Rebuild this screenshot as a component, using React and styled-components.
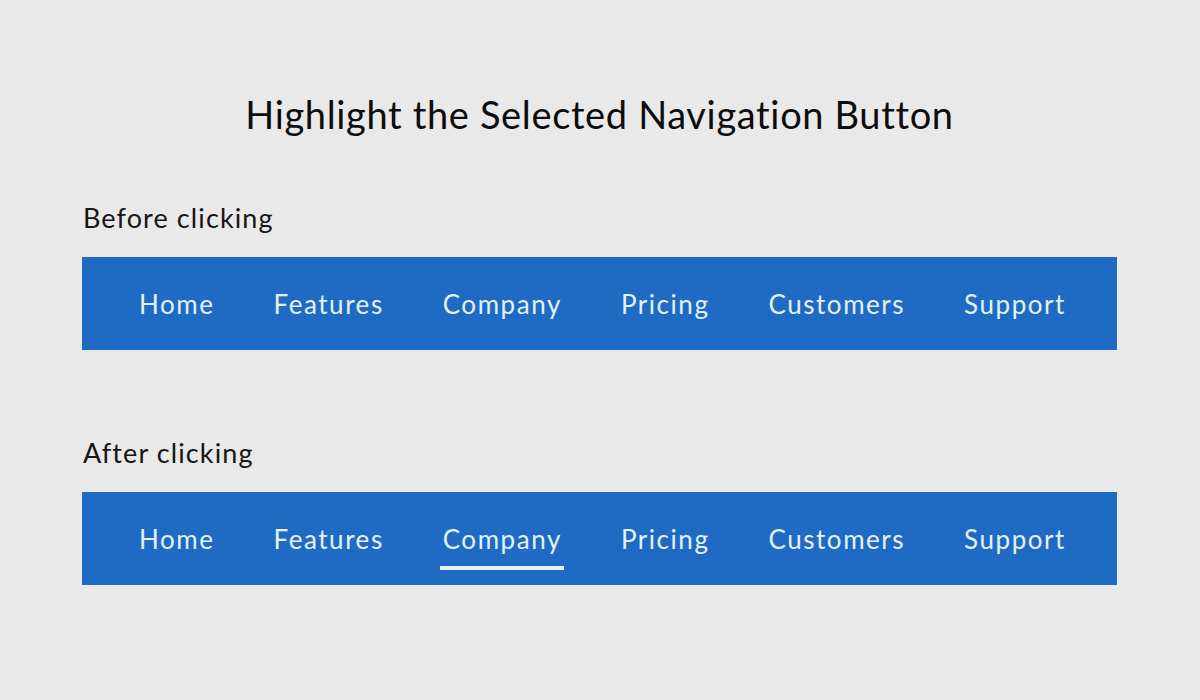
import React, { useState } from "react";
import styled, { createGlobalStyle } from "styled-components";

const Global = createGlobalStyle`
  html, body { margin: 0; padding: 0; background: #e9e9e9; }
  body { font-family: "Lato", "Noto Sans", sans-serif; color: #111; }
`;

const Page = styled.div`
  width: 1200px;
  height: 700px;
  box-sizing: border-box;
  padding: 90px 83px 0 82px;
  display: flex;
  flex-direction: column;
`;

const Title = styled.h1`
  margin: 0;
  text-align: center;
  font-size: 38px;
  font-weight: 400;
  line-height: 48px;
  letter-spacing: 0.65px;
  color: #0d0d0d;
`;

const Section = styled.section`
  display: flex;
  flex-direction: column;
  margin-top: ${(p) => p.$top}px;
`;

const Label = styled.div`
  font-size: 27px;
  line-height: 34px;
  letter-spacing: 1.1px;
  color: #161616;
  margin-left: 1px;
  margin-bottom: 22px;
`;

const Bar = styled.nav`
  height: 93px;
  background: #1f6bc4;
  display: flex;
  align-items: center;
  justify-content: center;
  gap: 59px;
  padding-left: 6px;
`;

const Item = styled.a`
  position: relative;
  font-size: 26px;
  line-height: 32px;
  color: #e3f1fb;
  text-decoration: none;
  cursor: pointer;
  letter-spacing: 1.55px;

  &::after {
    content: "";
    position: absolute;
    left: -3px;
    right: -2px;
    bottom: -15px;
    height: 4px;
    background: #eaf4fc;
    display: ${(p) => (p.$active ? "block" : "none")};
  }
`;

const items = ["Home", "Features", "Company", "Pricing", "Customers", "Support"];

function Nav({ active, onSelect }) {
  return (
    <Bar>
      {items.map((it) => (
        <Item key={it} $active={active === it} onClick={() => onSelect && onSelect(it)}>
          {it}
        </Item>
      ))}
    </Bar>
  );
}

export default function App() {
  const [sel, setSel] = useState("Company");
  return (
    <>
      <Global />
      <Page>
        <Title>Highlight the Selected Navigation Button</Title>
        <Section $top={63}>
          <Label>Before clicking</Label>
          <Nav active={null} />
        </Section>
        <Section $top={86}>
          <Label>After clicking</Label>
          <Nav active={sel} onSelect={setSel} />
        </Section>
      </Page>
    </>
  );
}
